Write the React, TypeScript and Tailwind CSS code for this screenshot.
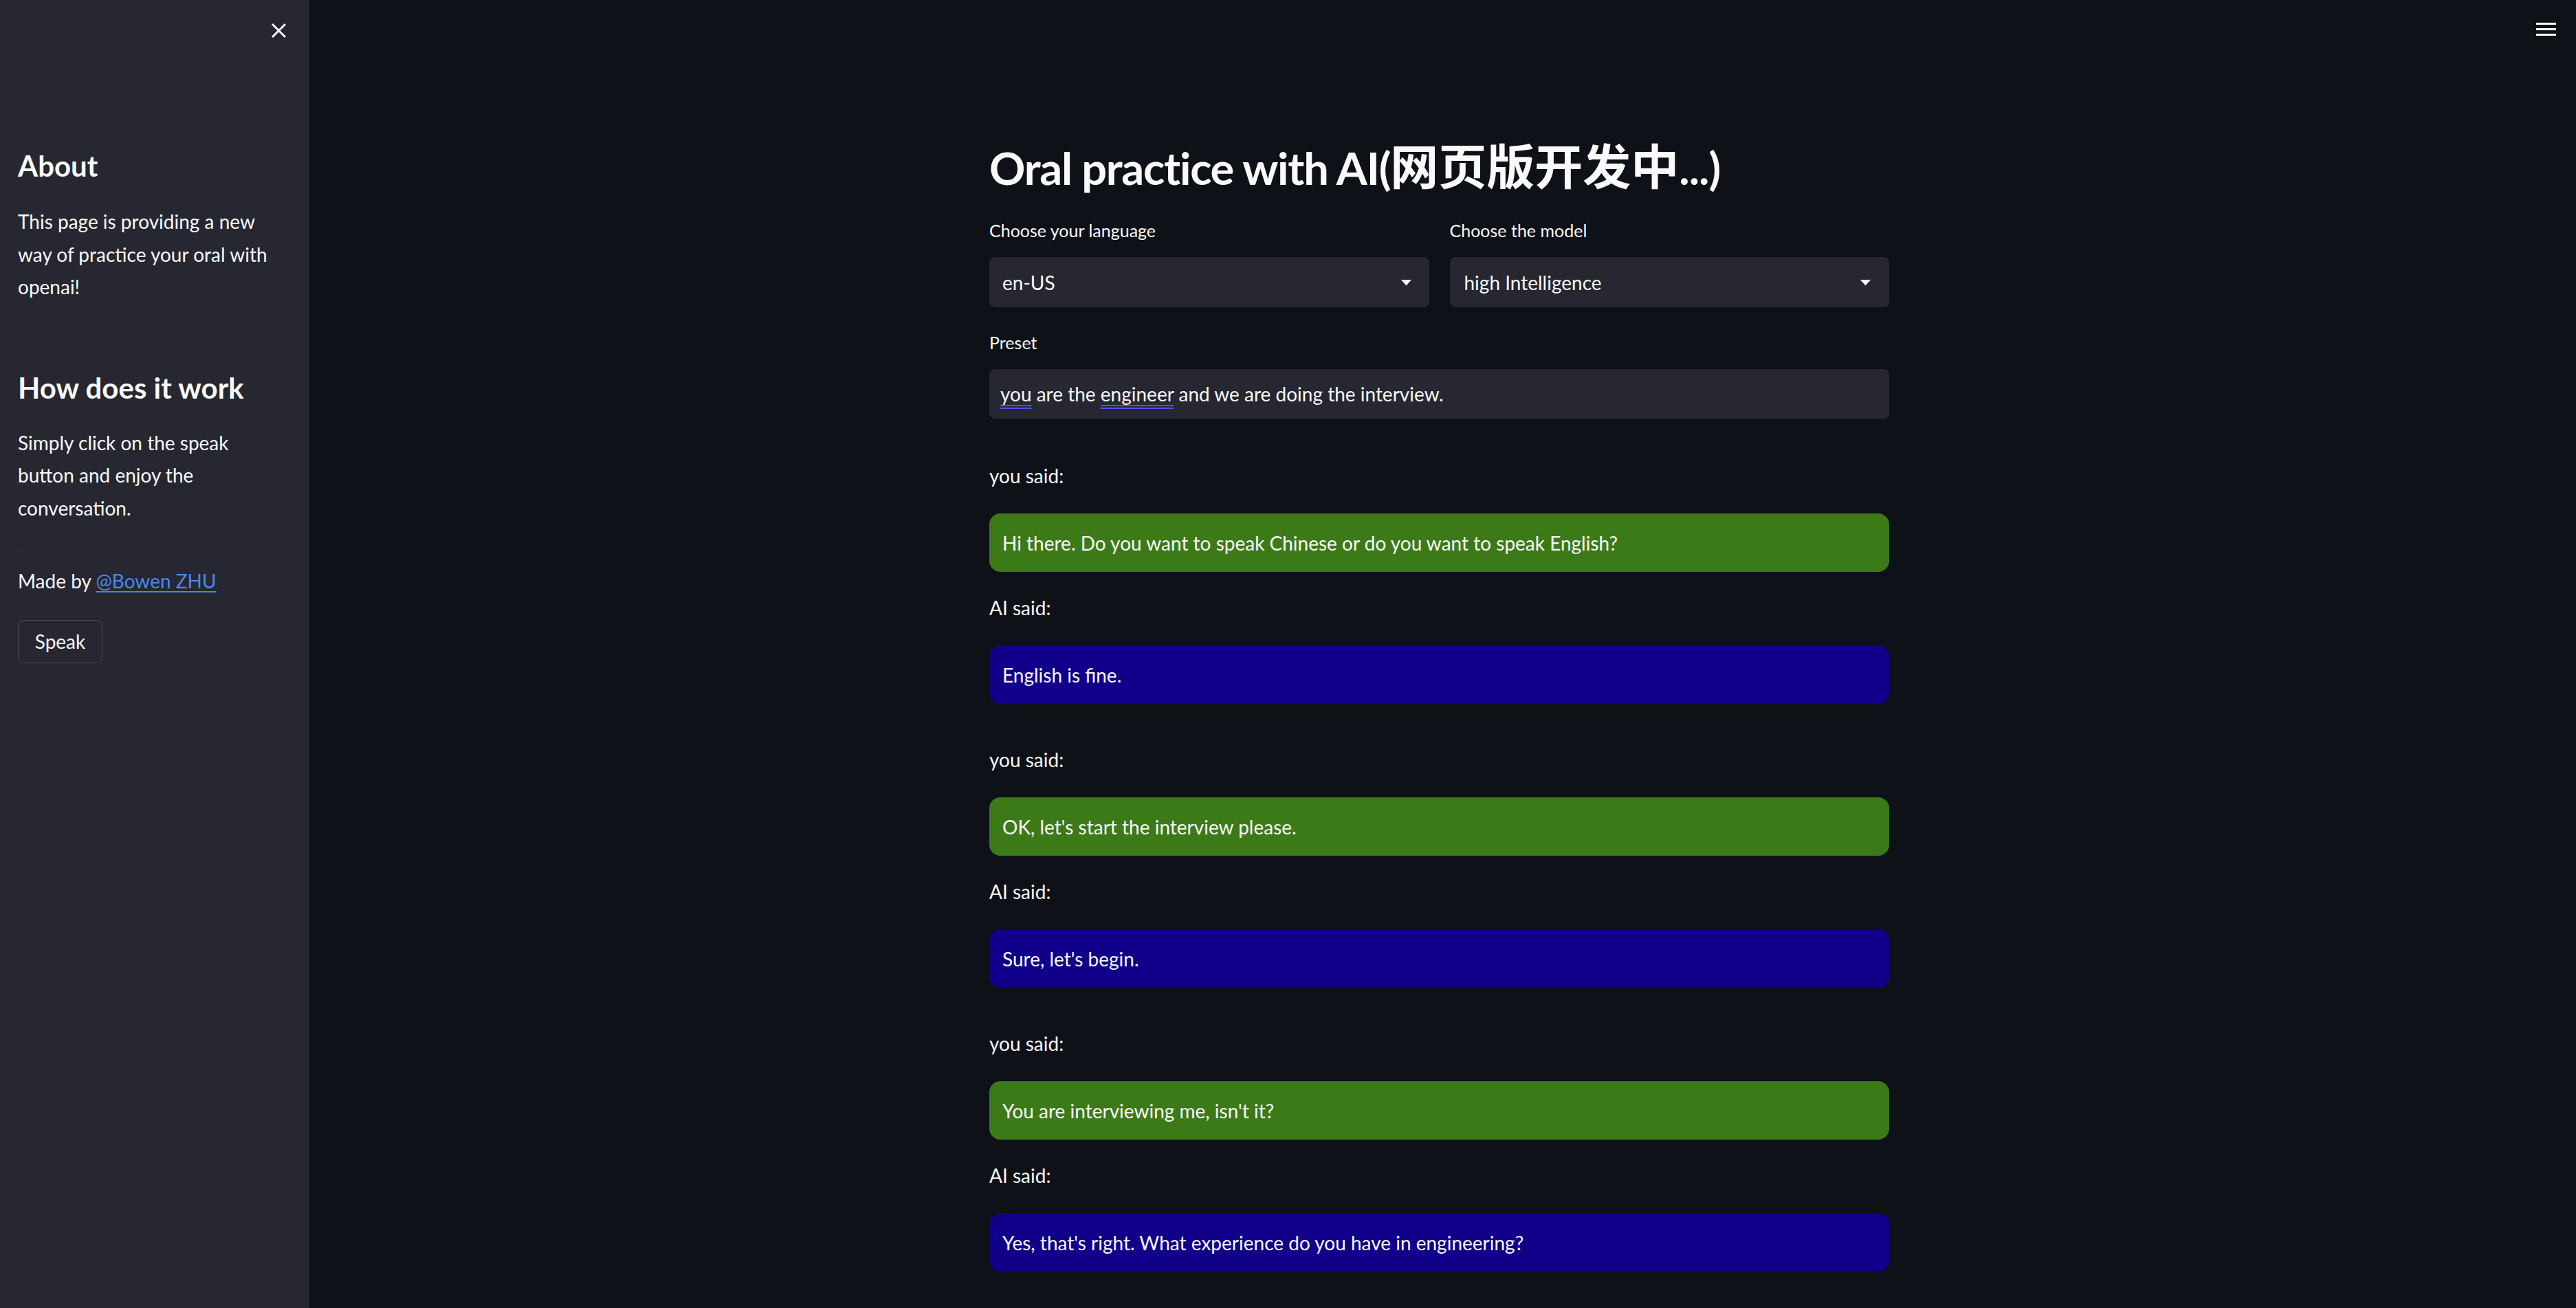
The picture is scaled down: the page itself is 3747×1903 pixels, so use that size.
import React from "react";

const FONT = { fontFamily: "Lato, 'Noto Sans CJK SC', sans-serif" };

function Caret() {
  return (
    <svg width="17" height="10" viewBox="0 0 17 10" className="shrink-0">
      <path d="M1 1 L16 1 L8.5 9.5 Z" fill="#fafafa" />
    </svg>
  );
}

function Bubble({ kind, text, mt }: { kind: "you" | "ai"; text: string; mt: string }) {
  const isYou = kind === "you";
  return (
    <div className={mt}>
      <div className="text-[28px] leading-[46px] h-[46px]">{isYou ? "you said:" : "AI said:"}</div>
      <div
        className={
          (isYou ? "bg-[#3c7a18] mt-[32px]" : "bg-[#11008a] mt-[32px]") +
          " h-[85px] rounded-[16px] px-[19px] flex items-center text-[28px] leading-[46px]"
        }
      >
        {text}
      </div>
    </div>
  );
}

export default function App() {
  return (
    <div className="flex w-[3747px] h-[1903px] overflow-hidden bg-[#0e1117] text-[#fafafa]" style={FONT}>
      <aside className="relative w-[450px] shrink-0 bg-[#262730] px-[26px]">
        <button className="absolute left-[394px] top-[32px] w-[23px] h-[24px] flex items-center justify-center">
          <svg width="23" height="23" viewBox="0 0 23 23">
            <path d="M2 2 L21 21 M21 2 L2 21" stroke="#fafafa" strokeWidth="3" strokeLinecap="butt" />
          </svg>
        </button>
        <h2 className="mt-[214px] text-[42px] leading-[54px] font-bold">About</h2>
        <p className="mt-[31px] max-w-[378px] text-[28px] leading-[47.5px]">
          This page is providing a new way of practice your oral with openai!
        </p>
        <div className="mt-[31px] h-[2px] bg-[#22232b] w-[394px]" />
        <h2 className="mt-[62px] text-[42px] leading-[54px] font-bold">How does it work</h2>
        <p className="mt-[30px] max-w-[378px] text-[28px] leading-[47.5px]">
          Simply click on the speak button and enjoy the conversation.
        </p>
        <div className="mt-[31px] h-[2px] bg-[#22232b] w-[394px]" />
        <p className="mt-[26px] text-[28px] leading-[47.5px]">
          Made by{" "}
          <a className="text-[#4a87f0] underline underline-offset-[4px]" href="#">
            @Bowen ZHU
          </a>
        </p>
        <button className="mt-[32px] w-[123px] h-[63px] rounded-[8px] border border-[#4a4b53] bg-[#262730] text-[28px] leading-none">
          Speak
        </button>
      </aside>

      <main className="relative flex-1 pr-[10px]">
        <div className="absolute left-[3239px] top-[33px] w-[29px] flex flex-col gap-[5px]">
          <div className="h-[3px] bg-[#fafafa]" />
          <div className="h-[3px] bg-[#fafafa]" />
          <div className="h-[3px] bg-[#fafafa]" />
        </div>

        <div className="mx-auto w-[1309px]">
          <h1 className="mt-[201px] h-[82px] text-[70px] leading-[82px] font-bold whitespace-nowrap">
            <span className="text-[65px] tracking-[-1.3px]">Oral practice with AI(</span>
            <span>网页版开发中</span>
            <span className="text-[65px] tracking-[-1px]">...)</span>
          </h1>

          <div className="mt-[32px] grid grid-cols-2 gap-x-[30px]">
            <div>
              <div className="text-[25px] leading-[40px]">Choose your language</div>
              <div className="mt-[19px] h-[73px] rounded-[8px] bg-[#262730] flex items-center justify-between pl-[19px] pr-[25px] text-[28px]">
                <span>en-US</span>
                <Caret />
              </div>
            </div>
            <div>
              <div className="text-[25px] leading-[40px]">Choose the model</div>
              <div className="mt-[19px] h-[73px] rounded-[8px] bg-[#262730] flex items-center justify-between pl-[21px] pr-[26px] text-[28px]">
                <span>high Intelligence</span>
                <Caret />
              </div>
            </div>
          </div>

          <div className="mt-[31px] text-[25px] leading-[40px]">Preset</div>
          <div className="mt-[19px] h-[72px] rounded-[8px] bg-[#262730] flex items-center pl-[16px] text-[28px]">
            <span>
              <span className="underline decoration-double decoration-[#4955f0] underline-offset-[5px]">you</span> are the{" "}
              <span className="underline decoration-double decoration-[#4955f0] underline-offset-[5px]">engineer</span> and we are doing the interview.
            </span>
          </div>

          <Bubble kind="you" mt="mt-[60px]" text="Hi there. Do you want to speak Chinese or do you want to speak English?" />
          <Bubble kind="ai" mt="mt-[29px]" text="English is fine." />
          <Bubble kind="you" mt="mt-[58px]" text="OK, let's start the interview please." />
          <Bubble kind="ai" mt="mt-[29px]" text="Sure, let's begin." />
          <Bubble kind="you" mt="mt-[58px]" text="You are interviewing me, isn't it?" />
          <Bubble kind="ai" mt="mt-[29px]" text="Yes, that's right. What experience do you have in engineering?" />
        </div>
      </main>
    </div>
  );
}
